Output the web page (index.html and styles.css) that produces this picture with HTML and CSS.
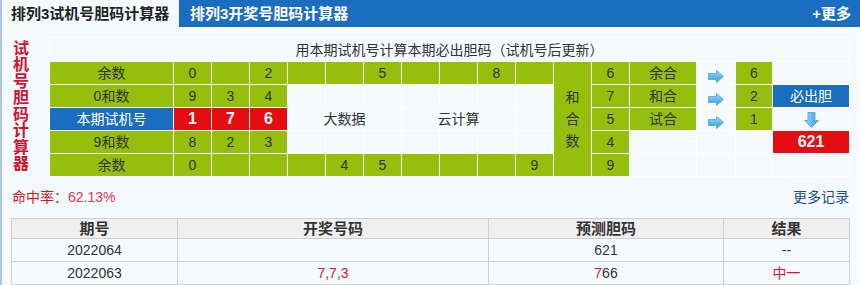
FILE: index.html
```html
<!DOCTYPE html>
<html lang="zh-CN">
<head>
<meta charset="utf-8">
<title>排列3试机号胆码计算器</title>
<link rel="stylesheet" href="styles.css">
</head>
<body>
<div class="page">
  <div class="topbar">
    <div class="tab tab-active">排列3试机号胆码计算器</div>
    <div class="tab tab-other">排列3开奖号胆码计算器</div>
    <div class="more">+更多</div>
  </div>

  <div class="calc">
    <div class="side"><div class="side-text">试机号胆码计算器</div></div>
    <table class="grid">
      <colgroup>
        <col class="c-label">
        <col class="c-d"><col class="c-d"><col class="c-d"><col class="c-d"><col class="c-d">
        <col class="c-d"><col class="c-d"><col class="c-d"><col class="c-d"><col class="c-d">
        <col class="c-sum">
        <col class="c-num">
        <col class="c-name">
        <col class="c-arrow">
        <col class="c-num2">
        <col class="c-result">
      </colgroup>
      <tr>
        <td colspan="17" class="title">用本期试机号计算本期必出胆码（试机号后更新）</td>
      </tr>
      <tr>
        <td class="g">余数</td>
        <td class="g">0</td><td class="g"></td><td class="g">2</td><td class="g"></td><td class="g"></td>
        <td class="g">5</td><td class="g"></td><td class="g"></td><td class="g">8</td><td class="g"></td>
        <td class="g sum" rowspan="5">和<br>合<br>数</td>
        <td class="g">6</td>
        <td class="g">余合</td>
        <td class="arrow-cell"><svg class="arrow-r" width="16" height="13" viewBox="0 0 16 13"><defs><linearGradient id="ga1" x1="0" y1="0" x2="0" y2="1"><stop offset="0" stop-color="#9adcfa"/><stop offset="1" stop-color="#3299e2"/></linearGradient></defs><path d="M0.5 3.5 H8.5 V0.5 L15.5 6.5 L8.5 12.5 V9.5 H0.5 Z" fill="url(#ga1)" stroke="#62aedd" stroke-width="1"/></svg></td>
        <td class="g">6</td>
        <td></td>
      </tr>
      <tr>
        <td class="g">0和数</td>
        <td class="g">9</td><td class="g">3</td><td class="g">4</td>
        <td></td><td></td><td></td><td></td><td></td><td></td><td></td>
        <td class="g">7</td>
        <td class="g">和合</td>
        <td class="arrow-cell"><svg class="arrow-r" width="16" height="13" viewBox="0 0 16 13"><defs><linearGradient id="ga2" x1="0" y1="0" x2="0" y2="1"><stop offset="0" stop-color="#9adcfa"/><stop offset="1" stop-color="#3299e2"/></linearGradient></defs><path d="M0.5 3.5 H8.5 V0.5 L15.5 6.5 L8.5 12.5 V9.5 H0.5 Z" fill="url(#ga2)" stroke="#62aedd" stroke-width="1"/></svg></td>
        <td class="g">2</td>
        <td class="b">必出胆</td>
      </tr>
      <tr>
        <td class="b">本期试机号</td>
        <td class="r">1</td><td class="r">7</td><td class="r">6</td>
        <td colspan="3" class="word">大数据</td>
        <td colspan="3" class="word">云计算</td>
        <td></td>
        <td class="g">5</td>
        <td class="g">试合</td>
        <td class="arrow-cell"><svg class="arrow-r" width="16" height="13" viewBox="0 0 16 13"><defs><linearGradient id="ga3" x1="0" y1="0" x2="0" y2="1"><stop offset="0" stop-color="#9adcfa"/><stop offset="1" stop-color="#3299e2"/></linearGradient></defs><path d="M0.5 3.5 H8.5 V0.5 L15.5 6.5 L8.5 12.5 V9.5 H0.5 Z" fill="url(#ga3)" stroke="#62aedd" stroke-width="1"/></svg></td>
        <td class="g">1</td>
        <td class="arrow-cell"><svg class="arrow-d" width="15" height="16" viewBox="0 0 15 16"><defs><linearGradient id="ga4" x1="0" y1="0" x2="1" y2="0"><stop offset="0" stop-color="#9adcfa"/><stop offset="1" stop-color="#3299e2"/></linearGradient></defs><path d="M4 0.5 H11 V8.5 H14.5 L7.5 15.5 L0.5 8.5 H4 Z" fill="url(#ga4)" stroke="#62aedd" stroke-width="1"/></svg></td>
      </tr>
      <tr>
        <td class="g">9和数</td>
        <td class="g">8</td><td class="g">2</td><td class="g">3</td>
        <td></td><td></td><td></td><td></td><td></td><td></td><td></td>
        <td class="g">4</td>
        <td></td>
        <td></td>
        <td></td>
        <td class="r">621</td>
      </tr>
      <tr>
        <td class="g">余数</td>
        <td class="g">0</td><td class="g"></td><td class="g"></td><td class="g"></td><td class="g">4</td>
        <td class="g">5</td><td class="g"></td><td class="g"></td><td class="g"></td><td class="g">9</td>
        <td class="g">9</td>
        <td></td>
        <td></td>
        <td></td>
        <td></td>
      </tr>
    </table>
  </div>

  <div class="stats">
    <div class="rate">命中率：<span class="rate-num">62.13%</span></div>
    <a class="more-rec" href="#">更多记录</a>
  </div>

  <table class="history">
    <colgroup>
      <col class="h-issue"><col class="h-draw"><col class="h-pred"><col class="h-res">
    </colgroup>
    <tr><th>期号</th><th>开奖号码</th><th>预测胆码</th><th>结果</th></tr>
    <tr><td>2022064</td><td></td><td>621</td><td>--</td></tr>
    <tr><td>2022063</td><td class="red">7,7,3</td><td><span class="red">7</span>66</td><td class="red">中一</td></tr>
    <tr><td></td><td></td><td></td><td></td></tr>
  </table>
</div>
</body>
</html>
```

FILE: styles.css
```css
* { box-sizing: border-box; }

body {
  margin: 0;
  font-family: "Liberation Sans", "Noto Sans CJK SC", sans-serif;
  font-size: 14px;
  color: #333;
  background: #f5faff;
}

.page {
  width: 860px;
  min-height: 285px;
  border-left: 2px solid #a9c6ea;
  background: #f5faff;
  overflow: hidden;
}

.topbar {
  display: flex;
  height: 27px;
  background: #1a6ec0;
}

.tab {
  font-size: 15px;
  font-weight: bold;
  line-height: 27px;
  color: #fff;
  white-space: nowrap;
}

.tab-active {
  width: 177px;
  padding-left: 9px;
  background: #f5faff;
  color: #222;
}

.tab-other {
  padding-left: 11px;
}

.more {
  margin-left: auto;
  padding-right: 9px;
  font-size: 15px;
  font-weight: bold;
  line-height: 27px;
  color: #fff;
}

.calc {
  display: flex;
  margin-top: 10px;
}

.side {
  width: 38px;
  height: 139px;
  display: flex;
  align-items: center;
  justify-content: center;
}

.side-text {
  width: 16px;
  font-size: 16px;
  font-weight: bold;
  line-height: 16.5px;
  color: #d4122c;
}

.grid {
  margin-left: 9px;
  width: 800px;
  table-layout: fixed;
  border-collapse: collapse;
}

.c-label { width: 124px; }
.c-d { width: 38px; }
.c-sum { width: 38px; }
.c-num { width: 38px; }
.c-name { width: 67px; }
.c-arrow { width: 39px; }
.c-num2 { width: 37px; }
.c-result { width: 77px; }

.grid td {
  border: 1px solid #fff;
  height: 23px;
  padding: 0;
  text-align: center;
  vertical-align: middle;
  font-size: 14px;
  line-height: 20px;
  color: #333;
}

.grid td.title {
  height: 24px;
}

.grid td.g { background: #94bf0b; }

.grid td.b {
  background: #1a6ec0;
  color: #fff;
}

.grid td.r {
  background: #e30d12;
  color: #fff;
  font-size: 16px;
  font-weight: bold;
}

.grid td.sum {
  line-height: 22px;
}

.grid td.arrow-cell {
  vertical-align: top;
}

.arrow-cell svg {
  display: block;
  margin: 8px auto 0;
}

.arrow-cell .arrow-d {
  margin-top: 4px;
}

.stats {
  display: flex;
  justify-content: space-between;
  margin-top: 10px;
  padding: 0 11px 0 10px;
  line-height: 20px;
  font-size: 14px;
}

.rate { color: #d8141e; }
.rate-num { color: #e6384f; }

.more-rec {
  color: #1a4d9a;
  text-decoration: none;
}

.history {
  margin: 11px 0 0 9px;
  width: 838px;
  table-layout: fixed;
  border-collapse: collapse;
}

.h-issue { width: 166px; }
.h-draw { width: 311px; }
.h-pred { width: 235px; }
.h-res { width: 126px; }

.history th,
.history td {
  border: 1px solid #cfcfcf;
  padding: 0;
  text-align: center;
  vertical-align: middle;
}

.history th {
  height: 20px;
  background: #efefef;
  font-size: 15px;
  line-height: 19px;
  font-weight: bold;
  color: #333;
}

.history td {
  height: 23px;
  font-size: 14px;
  line-height: 20px;
  color: #333;
}

.history .red { color: #e0141e; }
```
